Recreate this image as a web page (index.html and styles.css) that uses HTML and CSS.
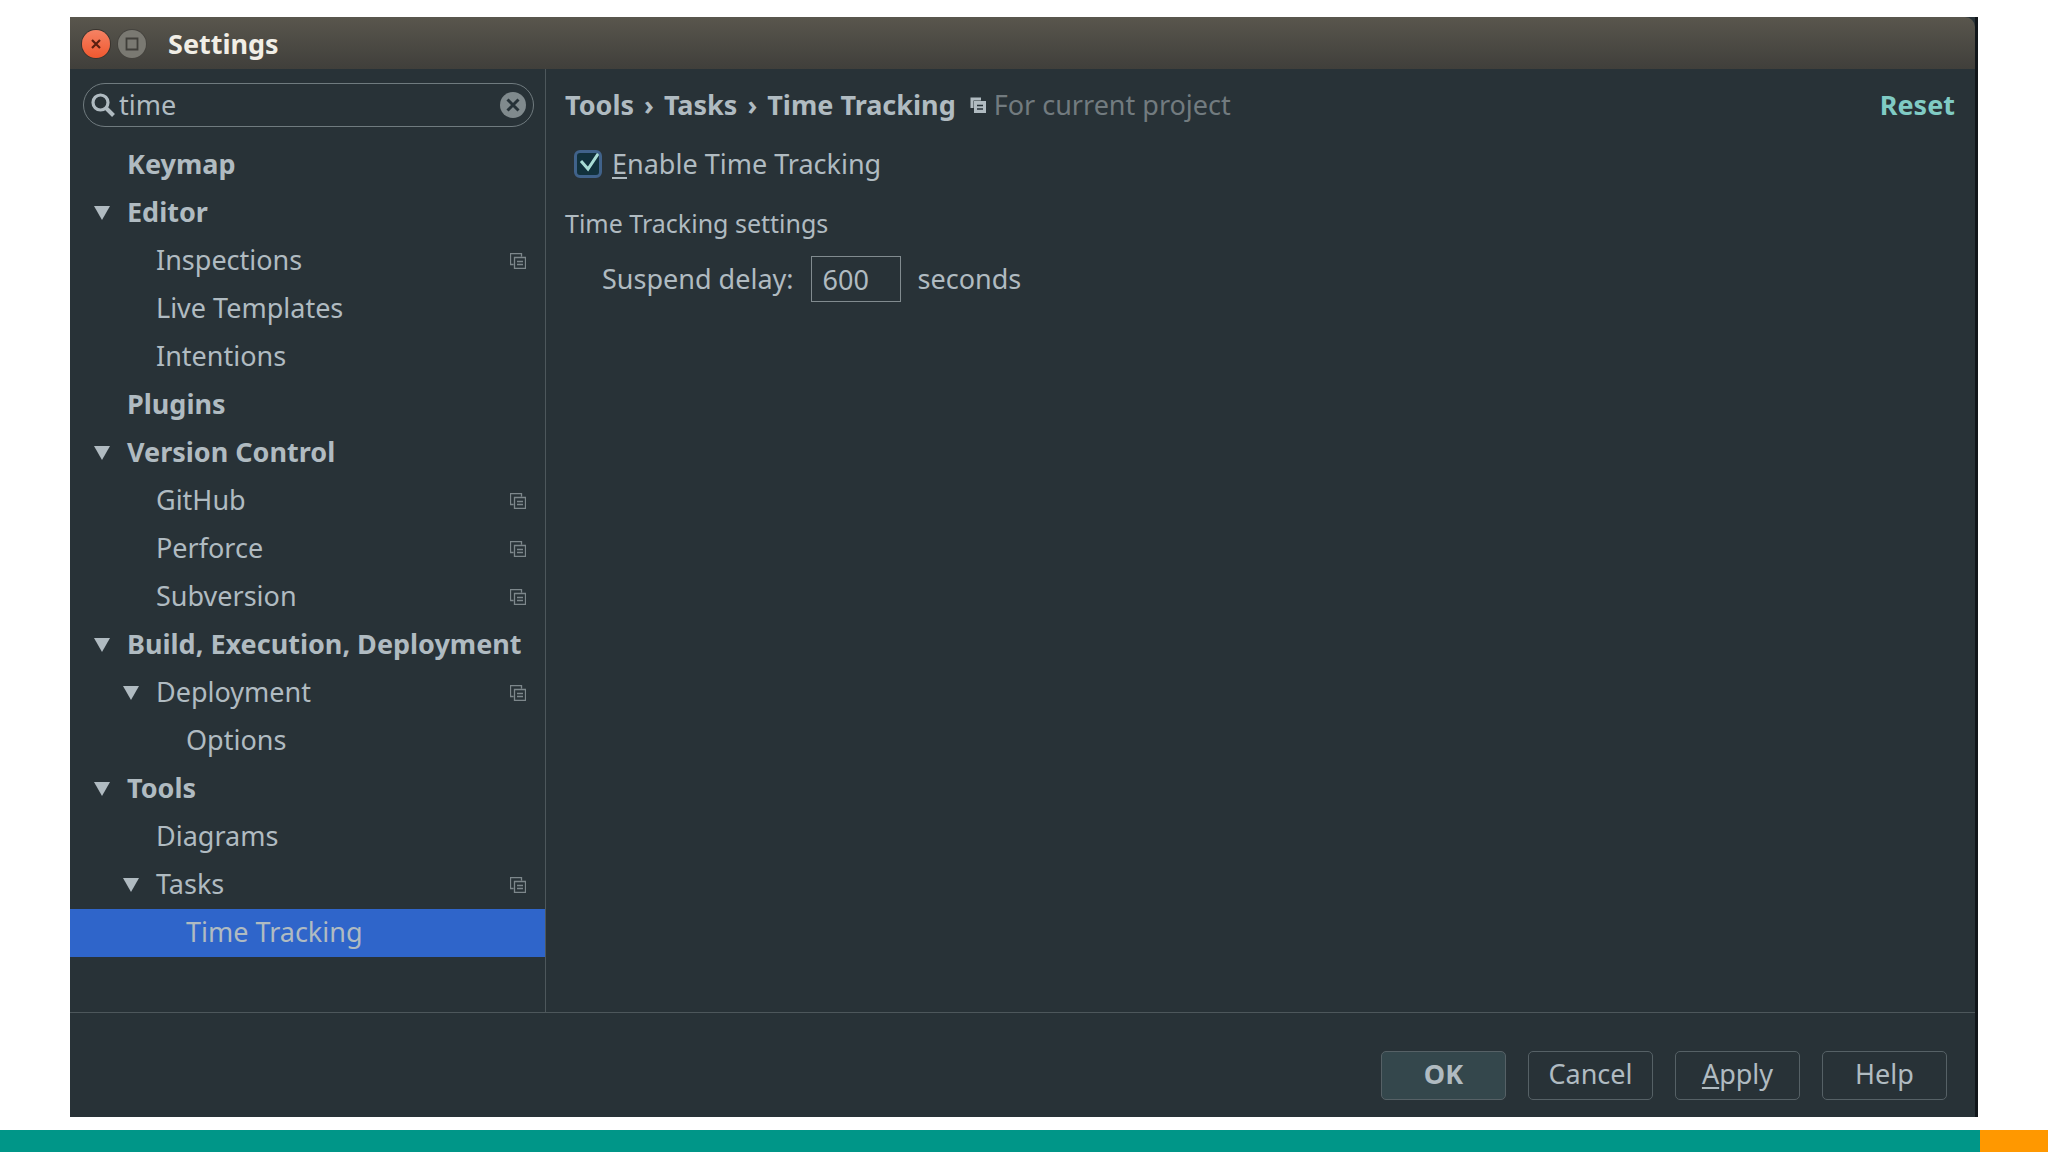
FILE: index.html
```html
<!DOCTYPE html>
<html lang="en">
<head>
    <meta charset="UTF-8">
    <meta name="viewport" content="width=device-width, initial-scale=1.0">
    <title>Settings</title>
    <link rel="stylesheet" href="styles.css">
</head>
<body>
    <!-- shared icons -->
    <svg class="icon-defs" aria-hidden="true">
        <symbol id="arrow" viewBox="0 0 16 14">
            <path d="M0 0h16L8 14z" fill="currentColor"/>
        </symbol>
        <symbol id="copy" viewBox="0 0 16 16">
            <path d="M3.500 11.500H.5V.5h11v3M4.500 4.500h11v11h-11zM7 8.500h6M7 11.500h6" fill="none" stroke="currentColor" stroke-width="1.300"/>
        </symbol>
    </svg>

    <div class="window">
        <header class="titlebar">
            <button class="win-btn close" aria-label="Close">
                <svg viewBox="0 0 28 28"><path d="M10 10l8 8M18 10l-8 8" stroke="#5a1f10" stroke-width="2.200"/></svg>
            </button>
            <button class="win-btn maximize" aria-label="Maximize">
                <svg viewBox="0 0 28 28"><path d="M8.500 8.500h11v11h-11z" fill="none" stroke="#403f3a" stroke-width="1.800"/></svg>
            </button>
            <h1>Settings</h1>
        </header>

        <div class="main">
            <aside class="sidebar">
                <div class="search">
                    <svg class="search-icon" viewBox="0 0 24 24"><circle cx="9.500" cy="9.500" r="7.500" fill="none" stroke="currentColor" stroke-width="3.200"/><path d="M15 15l7.500 7.500" stroke="currentColor" stroke-width="4"/></svg>
                    <input type="text" value="time" aria-label="Search settings">
                    <button class="clear" aria-label="Clear search">
                        <svg viewBox="0 0 26 26"><circle cx="13" cy="13" r="13" fill="#808a8d"/><path d="M7.500 7.500l11 11M18.500 7.500l-11 11" stroke="#263238" stroke-width="3"/></svg>
                    </button>
                </div>

                <ul class="tree">
                    <li><button class="row group">Keymap</button></li>
                    <li>
                        <button class="row group"><svg class="arrow"><use href="#arrow"/></svg>Editor</button>
                        <ul>
                            <li><button class="row level-1">Inspections<svg class="copy"><use href="#copy"/></svg></button></li>
                            <li><button class="row level-1">Live Templates</button></li>
                            <li><button class="row level-1">Intentions</button></li>
                        </ul>
                    </li>
                    <li><button class="row group">Plugins</button></li>
                    <li>
                        <button class="row group"><svg class="arrow"><use href="#arrow"/></svg>Version Control</button>
                        <ul>
                            <li><button class="row level-1">GitHub<svg class="copy"><use href="#copy"/></svg></button></li>
                            <li><button class="row level-1">Perforce<svg class="copy"><use href="#copy"/></svg></button></li>
                            <li><button class="row level-1">Subversion<svg class="copy"><use href="#copy"/></svg></button></li>
                        </ul>
                    </li>
                    <li>
                        <button class="row group"><svg class="arrow"><use href="#arrow"/></svg>Build, Execution, Deployment</button>
                        <ul>
                            <li>
                                <button class="row level-1"><svg class="arrow"><use href="#arrow"/></svg>Deployment<svg class="copy"><use href="#copy"/></svg></button>
                                <ul>
                                    <li><button class="row level-2">Options</button></li>
                                </ul>
                            </li>
                        </ul>
                    </li>
                    <li>
                        <button class="row group"><svg class="arrow"><use href="#arrow"/></svg>Tools</button>
                        <ul>
                            <li><button class="row level-1">Diagrams</button></li>
                            <li>
                                <button class="row level-1"><svg class="arrow"><use href="#arrow"/></svg>Tasks<svg class="copy"><use href="#copy"/></svg></button>
                                <ul>
                                    <li><button class="row level-2 selected">Time Tracking</button></li>
                                </ul>
                            </li>
                        </ul>
                    </li>
                </ul>
            </aside>

            <main class="content">
                <div class="content-header">
                    <h2>Tools <span class="sep">›</span> Tasks <span class="sep">›</span> Time Tracking</h2>
                    <svg class="scope-icon" viewBox="0 0 16 16"><path d="M2 11V2h9" fill="none" stroke="currentColor" stroke-width="3"/><path d="M4 4h12v12H4z" fill="currentColor"/><path d="M7 8.500h6M7 12h6" stroke="#263238" stroke-width="1.600"/></svg>
                    <span class="scope">For current project</span>
                    <a class="reset" href="#">Reset</a>
                </div>

                <div class="check-row">
                    <input type="checkbox" id="enable" checked>
                    <label for="enable"><u>E</u>nable Time Tracking</label>
                </div>

                <h3>Time Tracking settings</h3>
                <div class="delay-row">
                    <label for="delay">Suspend delay:</label>
                    <input type="text" id="delay" value="600">
                    <span>seconds</span>
                </div>
            </main>
        </div>

        <footer class="actions">
            <button class="btn primary">OK</button>
            <button class="btn">Cancel</button>
            <button class="btn"><u>A</u>pply</button>
            <button class="btn">Help</button>
        </footer>
    </div>

    <div class="strip">
        <div class="strip-accent"></div>
    </div>
</body>
</html>
```
FILE: styles.css
```css
* {
    box-sizing: border-box;
}
body {
    margin: 0;
    min-height: 100vh;
    display: flex;
    flex-direction: column;
    background: #fff;
    color: #b0bbc1;
    font-family: "Noto Sans", "Open Sans", sans-serif;
    font-size: 27px;
    line-height: 32px;
}
button, input {
    font: inherit;
    color: inherit;
    margin: 0;
    padding: 0;
    border: none;
    background: none;
}
h1, h2, h3 {
    margin: 0;
    font-size: 27px;
}
ul {
    list-style: none;
    margin: 0;
    padding: 0;
}
u {
    text-underline-offset: 3px;
}
.icon-defs {
    display: none;
}

/* window */
.window {
    flex: 1;
    display: flex;
    flex-direction: column;
    margin: 17px 70px 13px;
    background: #283237;
    border-right: 3px solid #11161a;
}
.titlebar {
    display: flex;
    align-items: center;
    height: 52px;
    padding: 2px 12px 0;
    gap: 8px;
    background: linear-gradient(#59564d, #403f3b);
    border-top-right-radius: 10px;
}
.titlebar h1 {
    margin-left: 14px;
    color: #f1eee6;
}
.win-btn {
    width: 28px;
    height: 28px;
    border-radius: 50%;
}
.win-btn svg {
    display: block;
}
.close {
    background: linear-gradient(#f58264, #f0582f);
    box-shadow: 0 0 0 1px #39342e;
}
.maximize {
    background: #7a7972;
    box-shadow: 0 0 0 1px #45433e;
}
.main {
    flex: 1;
    display: flex;
}

/* sidebar */
.sidebar {
    width: 476px;
    flex-shrink: 0;
    border-right: 1px solid #4d575b;
}
.search {
    display: flex;
    align-items: center;
    height: 44px;
    margin: 14px 11px 14px 13px;
    padding: 0 7px;
    border: 1px solid #707b7f;
    border-radius: 22px;
}
.search-icon {
    width: 24px;
    height: 24px;
    flex-shrink: 0;
}
.search input {
    flex: 1;
    min-width: 0;
    padding-left: 4px;
    outline: none;
}
.clear {
    width: 26px;
    height: 26px;
}
.clear svg {
    display: block;
}
.row {
    display: flex;
    align-items: center;
    width: 100%;
    height: 48px;
    padding-right: 19px;
    padding-bottom: 3px;
    text-align: left;
    white-space: nowrap;
}
.group {
    padding-left: 57px;
    font-weight: bold;
}
.level-1 {
    padding-left: 86px;
}
.level-2 {
    padding-left: 116px;
}
.selected {
    background: #2f65ca;
}
/* the arrow hangs in the indent, so labels stay aligned */
.arrow {
    width: 16px;
    height: 14px;
    flex-shrink: 0;
    margin: 2px 17px 0 -33px;
}
.copy {
    width: 16px;
    height: 16px;
    margin: 2px 0 0 auto;
    color: #7d878b;
}

/* content */
.content {
    flex: 1;
    padding: 20px 20px 20px 19px;
}
.content-header {
    display: flex;
    align-items: center;
}
.sep {
    margin: 0 3px;
}
.scope-icon {
    width: 16px;
    height: 16px;
    margin: 0 8px 0 14px;
}
.scope {
    color: #727b7f;
}
.reset {
    margin-left: auto;
    color: #80cbc4;
    font-weight: bold;
    text-decoration: none;
}
.check-row {
    display: flex;
    align-items: center;
    margin: 27px 0;
    padding-left: 9px;
    gap: 10px;
}
.check-row input {
    appearance: none;
    width: 28px;
    height: 28px;
    border: 3px solid #40628a;
    border-radius: 6px;
    background: #12313c url("data:image/svg+xml,%3Csvg xmlns='http://www.w3.org/2000/svg' viewBox='0 0 28 28'%3E%3Cpath d='M7 11l7 8L26 1' fill='none' stroke='%23a9dcd4' stroke-width='3'/%3E%3C/svg%3E") center / 28px no-repeat border-box;
}
.content h3 {
    font-size: 25px;
    font-weight: normal;
}
.delay-row {
    display: flex;
    align-items: center;
    margin-top: 17px;
    padding-left: 37px;
    gap: 17px;
}
.delay-row input {
    width: 90px;
    height: 46px;
    padding-left: 11px;
    border: 1px solid #818b8f;
}

/* footer */
.actions {
    display: flex;
    justify-content: flex-end;
    gap: 22px;
    padding: 38px 28px 17px;
    border-top: 1px solid #4d575b;
}
.btn {
    width: 125px;
    height: 49px;
    padding-bottom: 3px;
    border: 1px solid #566166;
    border-radius: 5px;
}
.primary {
    background: #34474c;
    font-weight: bold;
}

/* bottom strip */
.strip {
    display: flex;
    justify-content: flex-end;
    height: 22px;
    background: #009688;
}
.strip-accent {
    width: 68px;
    background: #ff9800;
}
```
